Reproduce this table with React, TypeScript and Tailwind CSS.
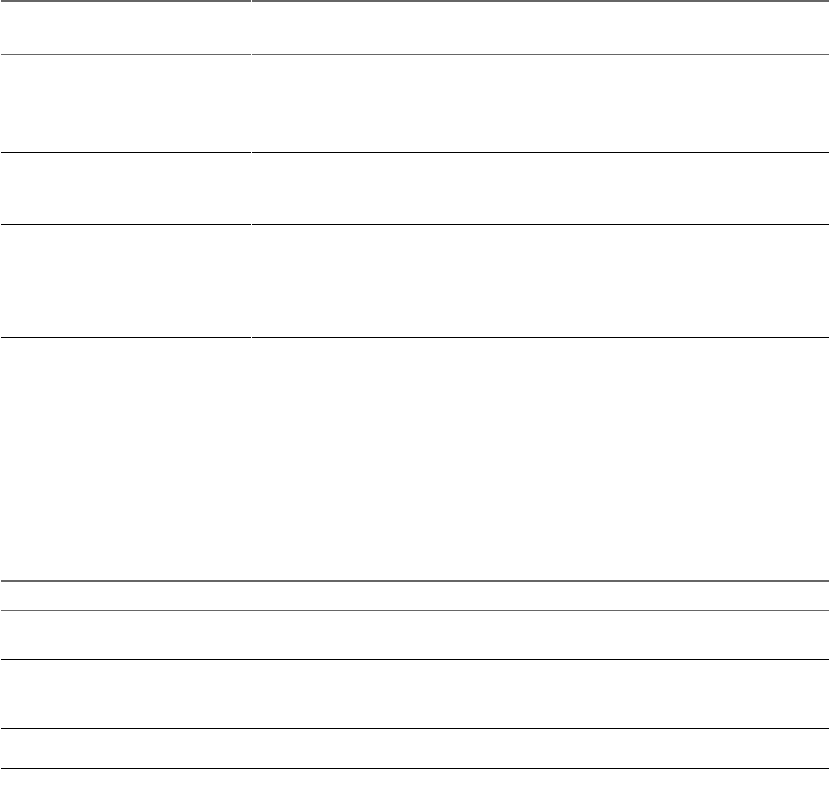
const topRows = [
  { h: "h-[55px]", head: true },
  { h: "h-[98px]" },
  { h: "h-[72px]" },
  { h: "h-[113px]" },
  { h: "h-[242px]", last: true },
];

const bottomRows = [
  { h: "h-[31px]", head: true },
  { h: "h-[49px]" },
  { h: "h-[69px]" },
  { h: "h-[40px]" },
];

function cellClass(row: { h: string; head?: boolean; last?: boolean }) {
  if (row.head) return `${row.h} border-t-2 border-b border-[#666666]`;
  if (row.last) return row.h;
  return `${row.h} border-b border-black`;
}

export default function App() {
  return (
    <div className="min-h-[797px] w-[830px] bg-white font-['Liberation_Sans',sans-serif] text-sm text-black">
      <div className="grid grid-cols-[250px_1fr] gap-x-px px-px">
        {topRows.map((row, i) => (
          <div key={i} className="contents">
            <div className={cellClass(row)} />
            <div className={cellClass(row)} />
          </div>
        ))}
      </div>
      <div className="flex flex-col px-px">
        {bottomRows.map((row, i) => (
          <div key={i} className={cellClass(row)} />
        ))}
      </div>
    </div>
  );
}
